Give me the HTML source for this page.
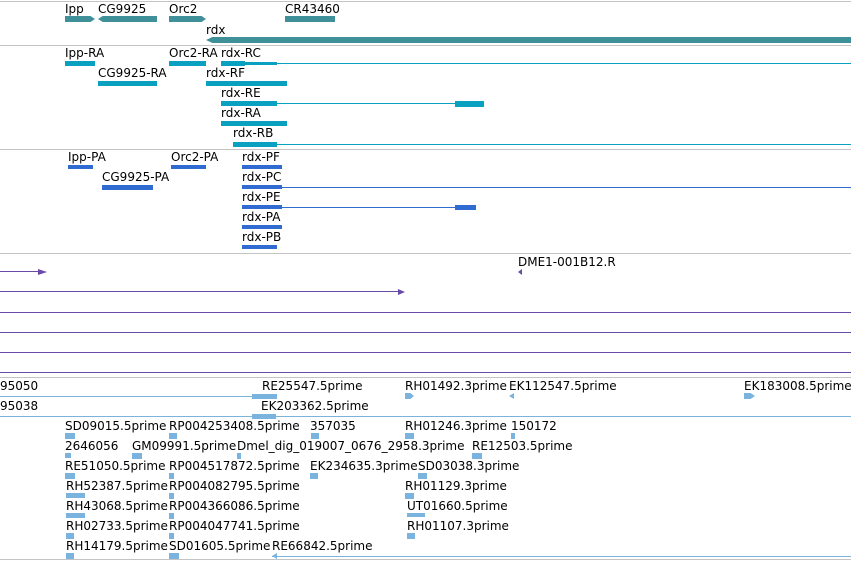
<html><head><style>
body{margin:0;width:851px;height:561px;background:#fff;position:relative;overflow:hidden;font-family:"DejaVu Sans","Liberation Sans",sans-serif;font-size:12px;color:#000}
div{position:absolute}
.t{line-height:14px;white-space:nowrap;margin-top:1px}
.s{height:1px;left:0;width:851px;background:#c4c4c4}
.a{background:#3f9098}.c{background:#0aa0c0}.b{background:#2f6bd0}.p{background:#6a4aa8}.l{background:#7ab4de}
</style></head><body>
<div class="s" style="top:1px"></div><div class="s" style="top:45px"></div><div class="s" style="top:149px"></div><div class="s" style="top:253px"></div><div class="s" style="top:377px"></div><div class="s" style="top:559px"></div>
<!-- track1 -->
<div class="t" style="left:65px;top:1px">Ipp</div><div class="t" style="left:98px;top:1px">CG9925</div><div class="t" style="left:169px;top:1px">Orc2</div><div class="t" style="left:285px;top:1px">CR43460</div>
<div class="a" style="left:65px;top:16px;width:30px;height:6px;clip-path:polygon(0 0,85% 0,100% 50%,85% 100%,0 100%)"></div>
<div class="a" style="left:98px;top:16px;width:59px;height:6px;clip-path:polygon(0 50%,8% 0,100% 0,100% 100%,8% 100%)"></div>
<div class="a" style="left:169px;top:16px;width:37px;height:6px;clip-path:polygon(0 0,88% 0,100% 50%,88% 100%,0 100%)"></div>
<div class="a" style="left:285px;top:16px;width:50px;height:6px"></div>
<div class="t" style="left:206px;top:22px">rdx</div>
<div class="a" style="left:206px;top:37px;width:645px;height:6px;clip-path:polygon(0 50%,1% 0,100% 0,100% 100%,1% 100%)"></div>
<!-- track2 -->
<div class="t" style="left:65px;top:45px">Ipp-RA</div><div class="t" style="left:169px;top:45px">Orc2-RA</div><div class="t" style="left:221px;top:45px">rdx-RC</div>
<div class="c" style="left:65px;top:61px;width:30px;height:5px"></div><div class="c" style="left:169px;top:61px;width:37px;height:5px"></div>
<div class="c" style="left:221px;top:61px;width:24px;height:5px"></div><div class="c" style="left:245px;top:62px;width:32px;height:3px"></div><div class="c" style="left:277px;top:63px;width:574px;height:1px"></div>
<div class="t" style="left:98px;top:65px">CG9925-RA</div><div class="t" style="left:206px;top:65px">rdx-RF</div>
<div class="c" style="left:98px;top:81px;width:59px;height:5px"></div><div class="c" style="left:206px;top:81px;width:81px;height:5px"></div>
<div class="t" style="left:221px;top:85px">rdx-RE</div>
<div class="c" style="left:221px;top:101px;width:56px;height:5px"></div><div class="c" style="left:277px;top:103px;width:178px;height:1px"></div><div class="c" style="left:455px;top:101px;width:29px;height:6px"></div>
<div class="t" style="left:221px;top:105px">rdx-RA</div>
<div class="c" style="left:221px;top:121px;width:66px;height:5px"></div>
<div class="t" style="left:233px;top:125px">rdx-RB</div>
<div class="c" style="left:233px;top:142px;width:44px;height:5px"></div><div class="c" style="left:277px;top:144px;width:574px;height:1px"></div>
<!-- track3 -->
<div class="t" style="left:68px;top:149px">Ipp-PA</div><div class="t" style="left:171px;top:149px">Orc2-PA</div><div class="t" style="left:242px;top:149px">rdx-PF</div>
<div class="b" style="left:68px;top:165px;width:25px;height:4px"></div><div class="b" style="left:171px;top:165px;width:35px;height:4px"></div><div class="b" style="left:242px;top:165px;width:40px;height:4px"></div>
<div class="t" style="left:102px;top:169px">CG9925-PA</div><div class="t" style="left:242px;top:169px">rdx-PC</div>
<div class="b" style="left:102px;top:185px;width:51px;height:5px"></div><div class="b" style="left:242px;top:185px;width:40px;height:4px"></div><div class="b" style="left:282px;top:187px;width:569px;height:1px"></div>
<div class="t" style="left:242px;top:189px">rdx-PE</div>
<div class="b" style="left:242px;top:205px;width:40px;height:4px"></div><div class="b" style="left:282px;top:207px;width:173px;height:1px"></div><div class="b" style="left:455px;top:205px;width:21px;height:5px"></div>
<div class="t" style="left:242px;top:209px">rdx-PA</div><div class="b" style="left:242px;top:225px;width:40px;height:4px"></div>
<div class="t" style="left:242px;top:229px">rdx-PB</div><div class="b" style="left:242px;top:245px;width:35px;height:4px"></div>
<!-- track4 -->
<div class="p" style="left:0;top:271px;width:40px;height:1px"></div><div class="p" style="left:38px;top:269px;width:9px;height:6px;clip-path:polygon(0 0,100% 50%,0 100%)"></div>
<div class="t" style="left:518px;top:254px">DME1-001B12.R</div><div class="p" style="left:518px;top:269px;width:4px;height:6px;clip-path:polygon(0 50%,100% 0,100% 100%)"></div>
<div class="p" style="left:0;top:291px;width:400px;height:1px"></div><div class="p" style="left:398px;top:289px;width:7px;height:6px;clip-path:polygon(0 0,100% 50%,0 100%)"></div>
<div class="p" style="left:0;top:312px;width:851px;height:1px"></div><div class="p" style="left:0;top:332px;width:851px;height:1px"></div><div class="p" style="left:0;top:352px;width:851px;height:1px"></div><div class="p" style="left:0;top:372px;width:851px;height:1px"></div>
<!-- track5 -->
<div class="t" style="left:0;top:378px">95050</div><div class="t" style="left:262px;top:378px">RE25547.5prime</div><div class="t" style="left:405px;top:378px">RH01492.3prime</div><div class="t" style="left:509px;top:378px">EK112547.5prime</div><div class="t" style="left:744px;top:378px">EK183008.5prime</div>
<div class="l" style="left:0;top:396px;width:275px;height:1px"></div><div class="l" style="left:252px;top:394px;width:25px;height:5px"></div>
<div class="l" style="left:405px;top:393px;width:9px;height:6px;clip-path:polygon(0 0,60% 0,100% 50%,60% 100%,0 100%)"></div><div class="l" style="left:509px;top:393px;width:5px;height:6px;clip-path:polygon(0 50%,100% 0,100% 100%)"></div><div class="l" style="left:744px;top:393px;width:11px;height:6px;clip-path:polygon(0 0,60% 0,100% 50%,60% 100%,0 100%)"></div>
<div class="t" style="left:0;top:398px">95038</div><div class="t" style="left:261px;top:398px">EK203362.5prime</div>
<div class="l" style="left:0;top:416px;width:851px;height:1px"></div><div class="l" style="left:252px;top:414px;width:24px;height:5px"></div>
<div class="t" style="left:65px;top:418px">SD09015.5prime</div><div class="t" style="left:169px;top:418px">RP004253408.5prime</div><div class="t" style="left:310px;top:418px">357035</div><div class="t" style="left:405px;top:418px">RH01246.3prime</div><div class="t" style="left:511px;top:418px">150172</div>
<div class="l" style="left:65px;top:433px;width:10px;height:6px"></div><div class="l" style="left:169px;top:433px;width:8px;height:6px"></div><div class="l" style="left:311px;top:433px;width:8px;height:6px"></div><div class="l" style="left:405px;top:433px;width:9px;height:6px"></div><div class="l" style="left:511px;top:433px;width:4px;height:6px"></div>
<div class="t" style="left:65px;top:438px">2646056</div><div class="t" style="left:132px;top:438px">GM09991.5prime</div><div class="t" style="left:237px;top:438px">Dmel_dig_019007_0676_2958.3prime</div><div class="t" style="left:472px;top:438px">RE12503.5prime</div>
<div class="l" style="left:65px;top:453px;width:6px;height:5px"></div><div class="l" style="left:132px;top:453px;width:10px;height:6px"></div><div class="l" style="left:237px;top:453px;width:4px;height:6px"></div><div class="l" style="left:472px;top:453px;width:10px;height:6px"></div>
<div class="t" style="left:65px;top:458px">RE51050.5prime</div><div class="t" style="left:169px;top:458px">RP004517872.5prime</div><div class="t" style="left:310px;top:458px">EK234635.3prime</div><div class="t" style="left:418px;top:458px">SD03038.3prime</div>
<div class="l" style="left:65px;top:473px;width:10px;height:6px"></div><div class="l" style="left:169px;top:473px;width:5px;height:6px"></div><div class="l" style="left:310px;top:473px;width:8px;height:6px"></div><div class="l" style="left:418px;top:473px;width:9px;height:6px"></div>
<div class="t" style="left:66px;top:478px">RH52387.5prime</div><div class="t" style="left:169px;top:478px">RP004082795.5prime</div><div class="t" style="left:405px;top:478px">RH01129.3prime</div>
<div class="l" style="left:66px;top:493px;width:19px;height:5px"></div><div class="l" style="left:169px;top:493px;width:5px;height:6px"></div><div class="l" style="left:405px;top:493px;width:9px;height:6px"></div>
<div class="t" style="left:66px;top:498px">RH43068.5prime</div><div class="t" style="left:169px;top:498px">RP004366086.5prime</div><div class="t" style="left:407px;top:498px">UT01660.5prime</div>
<div class="l" style="left:66px;top:513px;width:19px;height:5px"></div><div class="l" style="left:169px;top:513px;width:5px;height:6px"></div><div class="l" style="left:407px;top:513px;width:18px;height:4px"></div>
<div class="t" style="left:66px;top:518px">RH02733.5prime</div><div class="t" style="left:169px;top:518px">RP004047741.5prime</div><div class="t" style="left:407px;top:518px">RH01107.3prime</div>
<div class="l" style="left:66px;top:533px;width:8px;height:6px"></div><div class="l" style="left:169px;top:533px;width:5px;height:6px"></div><div class="l" style="left:407px;top:533px;width:8px;height:6px"></div>
<div class="t" style="left:66px;top:538px">RH14179.5prime</div><div class="t" style="left:169px;top:538px">SD01605.5prime</div><div class="t" style="left:272px;top:538px">RE66842.5prime</div>
<div class="l" style="left:66px;top:553px;width:8px;height:6px"></div><div class="l" style="left:169px;top:553px;width:10px;height:6px"></div><div class="l" style="left:272px;top:556px;width:579px;height:1px"></div><div class="l" style="left:272px;top:553px;width:5px;height:6px;clip-path:polygon(0 50%,100% 0,100% 100%)"></div>
</body></html>
